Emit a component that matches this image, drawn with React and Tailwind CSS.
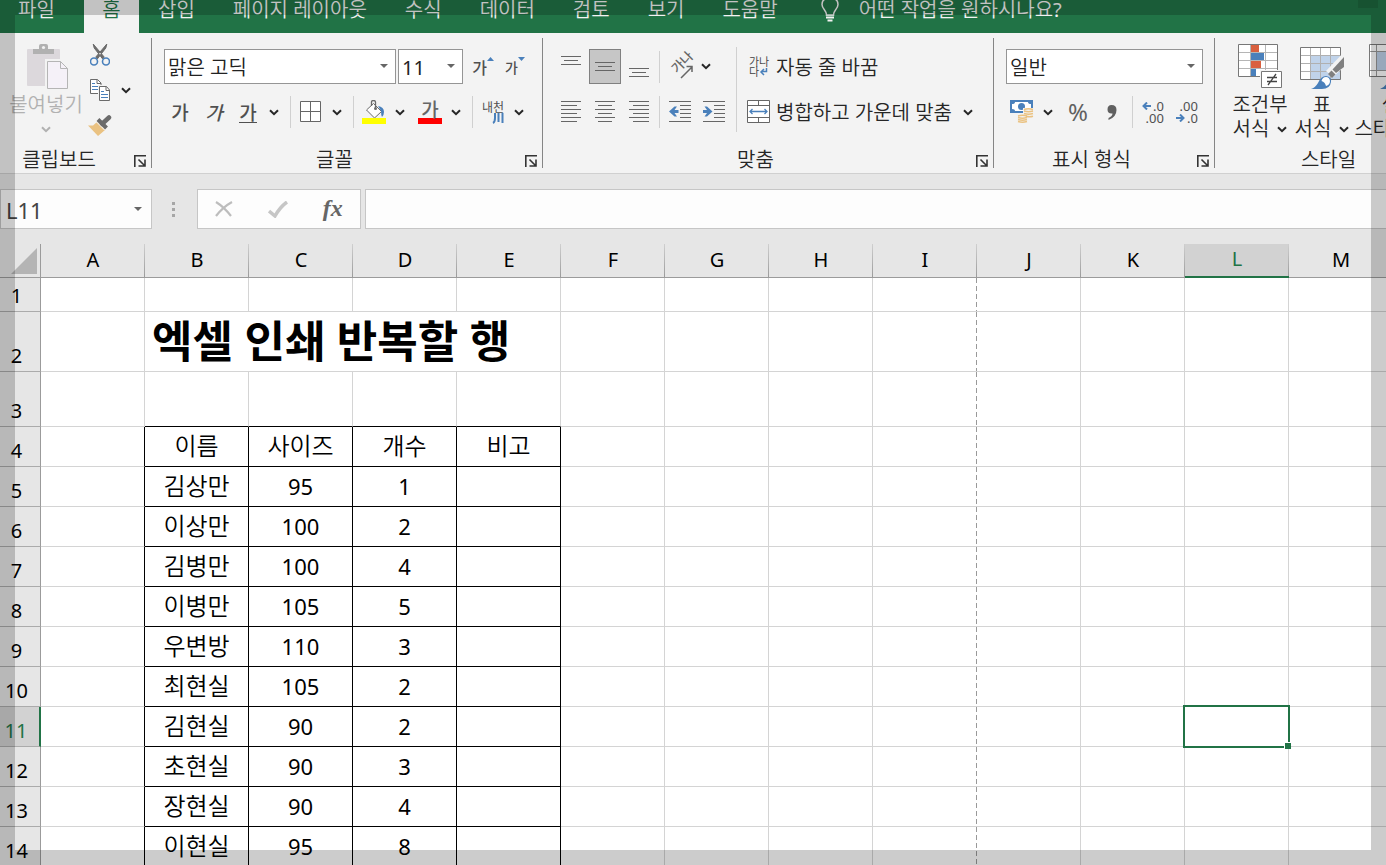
import React, { useState } from "react";

const TABS = [
  "삽입",
  "페이지 레이아웃",
  "수식",
  "데이터",
  "검토",
  "보기",
  "도움말",
];

const COLUMNS = ["A", "B", "C", "D", "E", "F", "G", "H", "I", "J", "K", "L", "M"];

const ITEMS = [
  { name: "이름", size: "사이즈", count: "개수", note: "비고" },
  { name: "김상만", size: 95, count: 1, note: "" },
  { name: "이상만", size: 100, count: 2, note: "" },
  { name: "김병만", size: 100, count: 4, note: "" },
  { name: "이병만", size: 105, count: 5, note: "" },
  { name: "우변방", size: 110, count: 3, note: "" },
  { name: "최현실", size: 105, count: 2, note: "" },
  { name: "김현실", size: 90, count: 2, note: "" },
  { name: "초현실", size: 90, count: 3, note: "" },
  { name: "장현실", size: 90, count: 4, note: "" },
  { name: "이현실", size: 95, count: 8, note: "" },
];

const FIRST_ITEM_ROW = 4;

/* ---------- small pieces ---------- */

const Chevron = ({ className = "text-[#262626]" }) => (
  <svg width="10" height="7" viewBox="0 0 10 7" className={className}>
    <path d="M1 1.2l4 4 4-4" fill="none" stroke="currentColor" strokeWidth="2" />
  </svg>
);

const Caret = ({ className = "" }) => (
  <svg width="8" height="4" viewBox="0 0 8 4" className={className}>
    <path d="M0 0h8L4 4z" fill="#666" />
  </svg>
);

const Divider = () => <div className="ml-[6px] mr-1 h-8 w-px bg-[#d0d0d0]" />;

const IconButton = ({ label, className = "", children }) => (
  <button
    aria-label={label}
    className={`flex h-8 w-8 shrink-0 items-center justify-center ${className}`}
  >
    {children}
  </button>
);

const MenuButton = ({ label }) => (
  <button
    aria-label={label}
    className="flex h-8 w-5 shrink-0 items-center justify-center"
  >
    <Chevron />
  </button>
);

const Combo = ({ label, options, className = "" }) => (
  <label className={`relative block h-[35px] shrink-0 ${className}`}>
    <select
      aria-label={label}
      className="h-full w-full appearance-none border border-[#959595] bg-white pl-[3px] pt-0.5 text-xl leading-8 text-[#222]"
    >
      {options.map((o) => (
        <option key={o}>{o}</option>
      ))}
    </select>
    <Caret className="pointer-events-none absolute right-2 top-[15px]" />
  </label>
);

const Launcher = ({ label }) => (
  <button aria-label={label} className="mr-[5px] shrink-0">
    <svg width="12" height="12" viewBox="0 0 12 12">
      <path
        d="M.8 12V.8H12M4.5 4.5l6 6M11 4.5V11H4.5"
        fill="none"
        stroke="#333"
        strokeWidth="1.6"
      />
    </svg>
  </button>
);

const Group = ({ title, launcher = true, className = "", titleClass = "pr-2", children }) => (
  <section
    className={`my-[5px] flex h-[130px] shrink-0 flex-col justify-between border-r border-[#858585] ${className}`}
  >
    {children}
    <div className="flex h-4 items-center">
      <span className={`flex-1 text-center text-xl leading-4 ${titleClass}`}>{title}</span>
      {launcher && (
        <div className="flex h-full items-end pb-px">
          <Launcher label={`${title} 설정`} />
        </div>
      )}
    </div>
  </section>
);

const LargeButton = ({ icon, lines, menu = true, className = "" }) => (
  <button
    className={`flex shrink-0 flex-col items-center pt-[6px] text-xl leading-6 ${className}`}
  >
    <span className="mb-[3px] flex h-[46px] items-start">{icon}</span>
    <span className="whitespace-nowrap">{lines[0]}</span>
    <span className="flex h-6 items-center gap-2 whitespace-nowrap">
      {lines[1]}
      {menu && <Chevron className="text-current" />}
    </span>
  </button>
);

/* ---------- icons ---------- */

const PasteIcon = () => (
  <svg width="42" height="46" viewBox="0 0 42 46" className="ml-1">
    <rect x="0" y="5" width="33" height="37" rx="1" fill="#dcd8dc" />
    <path d="M6 10V5h6V2q0-2 2-2h5q2 0 2 2v3h6v5z" fill="#b1b1b1" />
    <circle cx="16.500" cy="3.500" r="1.600" fill="#f3f3f3" />
    <path d="M18 15h16l8 8v23H18z" fill="#f3f3f3" />
    <path d="M20.500 17.500h13l7 7v20h-20z" fill="#f5f1f8" stroke="#b5b5b5" />
    <path d="M33.500 17.500v7h7" fill="none" stroke="#b5b5b5" />
  </svg>
);

const CutIcon = () => (
  <svg width="20" height="22" viewBox="0 0 20 22">
    <path d="M3.200 0l1 4 8.500 11 1.500-2zM16.800 0l-1 4-8.500 11-1.500-2z" fill="#6b6b6b" stroke="#6b6b6b" />
    <circle cx="4" cy="17.500" r="3.500" fill="none" stroke="#4a80bb" strokeWidth="1.600" />
    <circle cx="16" cy="17.500" r="3.500" fill="none" stroke="#4a80bb" strokeWidth="1.600" />
  </svg>
);

const CopyIcon = () => (
  <svg width="20" height="22" viewBox="0 0 20 22">
    <path d="M.5.5h7l3.500 3.500v10.500H.5z" fill="#fff" stroke="#6b6b6b" />
    <path d="M7 .5V4.500h4" fill="none" stroke="#6b6b6b" />
    <path d="M2 4.500h3M2 7.500h6M2 10.500h6" stroke="#4a80bb" />
    <path d="M8 6h9l3 3v13H8z" fill="#f3f3f3" />
    <path d="M9.500 7.500h7l3 3.500v10.500h-10z" fill="#fff" stroke="#6b6b6b" />
    <path d="M16 7.500v4h4" fill="none" stroke="#6b6b6b" />
    <path d="M11 12.500h3M11 15.500h7M11 18.500h7" stroke="#4a80bb" />
  </svg>
);

const BrushIcon = () => (
  <svg width="24" height="21" viewBox="0 0 24 21">
    <path d="M0 10.500l5 0 4-3.500 8 8-7 6z" fill="#eac282" />
    <path d="M10 4.500l8.500 8.500" stroke="#6b6b6b" strokeWidth="4" />
    <path d="M14 9l7-6.500" stroke="#6b6b6b" strokeWidth="4.500" strokeLinecap="round" />
    <path d="M8 6.500l8.500 8.500" stroke="#f3f3f3" />
  </svg>
);

const BordersIcon = () => (
  <svg width="22" height="22" viewBox="0 0 22 22">
    <path d="M.5.5h20v20H.5z" fill="#fff" stroke="#666" />
    <path d="M10.500 0v21M0 10.500h21" stroke="#666" />
  </svg>
);

const FillIcon = () => (
  <svg width="24" height="24" viewBox="0 0 24 24">
    <path d="M11.500 3.500l8 8-7 6.500-8-8z" fill="#fff" stroke="#6b6b6b" />
    <path d="M9.500 6V2q0-1.500 2-1.500t2 1.500v6" fill="none" stroke="#6b6b6b" strokeWidth="1.300" />
    <circle cx="13.500" cy="8.500" r="1.500" fill="#6b6b6b" />
    <path d="M16 6q6 1 6 6 0 3-2 5-1-2-1-6z" fill="#4a80bb" />
    <path d="M0 18h24v6H0z" fill="#ff0" />
  </svg>
);

const PhoneticIcon = () => (
  <span className="flex flex-col items-center text-xs leading-3 text-[#505050]">
    내천
    <svg width="22" height="11" viewBox="0 0 22 11">
      <path d="M13 0v5q0 4-2 5M16.500 0v9M20.500 0v10" fill="none" stroke="#4a80bb" strokeWidth="2" />
    </svg>
  </span>
);

const AlignVertical = ({ className = "" }) => (
  <svg width="20" height="10" viewBox="0 0 20 10" className={className}>
    <path d="M0 .5h20M3 4.500h14M0 8.500h20" stroke="#666" />
  </svg>
);

const AlignIcon = ({ d }) => (
  <svg width="20" height="22" viewBox="0 0 20 22">
    <path d="M0 .5h20M0 8.500h20M0 16.500h20" stroke="#666" />
    <path d={d} stroke="#666" />
  </svg>
);

const IndentIcon = ({ arrow }) => (
  <svg width="22" height="22" viewBox="0 0 22 22">
    <path d="M0 .5h22M11 4.500h11M11 8.500h11M11 12.500h11M11 16.500h11M0 20.500h22" stroke="#666" />
    <path d={arrow} fill="#4a80bb" />
  </svg>
);

const OrientationIcon = () => (
  <svg width="24" height="24" viewBox="0 0 24 24" className="overflow-visible">
    <text
      x="0"
      y="0"
      transform="translate(9 19) rotate(-45)"
      fontSize="13"
      fontWeight="500"
      fill="#666"
      fontFamily="Noto Sans CJK KR, sans-serif"
    >
      가나
    </text>
    <path d="M13 23L24 12M18.500 11.500H24V17" fill="none" stroke="#666" strokeWidth="1.500" />
  </svg>
);

const WrapIcon = () => (
  <span className="flex w-[25px] flex-col pl-1 text-left text-[11px] leading-[10px] text-[#404040]">
    <span className="whitespace-nowrap">가나</span>
    <span className="flex items-center">
      다
      <svg width="9" height="8" viewBox="0 0 9 8">
        <path d="M7.500 0v3.500H2M5 1L2 4l3 3" fill="none" stroke="#4a80bb" strokeWidth="1.500" />
      </svg>
    </span>
  </span>
);

const MergeIcon = () => (
  <svg width="23" height="24" viewBox="0 0 23 24">
    <path d="M.5.5h22v22H.5z" fill="#fff" stroke="#666" />
    <path d="M0 5.500h23M0 17.500h23M11.500 0v5.500M11.500 17.500V23" stroke="#666" />
    <path d="M3 11.500h17M5.500 9L3 11.500 5.500 14M17.500 9l2.500 2.500-2.500 2.500" fill="none" stroke="#4a80bb" strokeWidth="1.300" />
  </svg>
);

const CurrencyIcon = () => (
  <svg width="24" height="24" viewBox="0 0 24 24">
    <path d="M0 0h23v13H0z" fill="#4a80bb" />
    <path d="M5 2h13q0 2 3 2v5q-3 0-3 2H5q0-2-3-2V4q3 0 3-2z" fill="#fff" />
    <circle cx="11.500" cy="6.500" r="3.500" fill="#4a80bb" />
    <path d="M13 8h10v9H18v5H8v-8h5z" fill="#f3f3f3" />
    <g fill="none" stroke="#eac282" strokeWidth="1.500">
      <path d="M14 9.500q4.500-1.500 9 0M14 11q4.500 1.500 9 0M14 13.500q4.500 1.500 9 0M16 16.200q3.500 1 7 0" />
      <path d="M8 16q4.500-1.500 9 0M8 17.500q4.500 1.500 9 0M8 19.500q4.500 1.500 9 0M8 21.500q4.500 1.500 9 0" />
    </g>
  </svg>
);

const SmallArrow = ({ flip = false }) => (
  <svg width="9" height="8" viewBox="0 0 9 8" className={flip ? "-scale-x-100" : ""}>
    <path d="M9 4H1.500M5 .5L1.500 4 5 7.500" fill="none" stroke="#4a80bb" strokeWidth="2" />
  </svg>
);

const DecimalIcon = ({ increase }) => (
  <span className="flex flex-col items-end text-[13px] leading-3 text-[#505050]">
    <span className="flex items-center gap-0.5">
      {increase && <SmallArrow />}
      {increase ? ".0" : ".00"}
    </span>
    <span className="flex items-center gap-0.5">
      {!increase && <SmallArrow flip />}
      {increase ? ".00" : ".0"}
    </span>
  </span>
);

const ConditionalIcon = () => (
  <svg width="44" height="44" viewBox="0 0 44 44">
    <path d="M.5.5h39v32H.5z" fill="#fff" stroke="#777" />
    <path d="M12.500 1v31M27.500 1v31M1 8.500h38M1 16.500h38M1 24.500h38" stroke="#b5b5b5" />
    <path d="M13 1h8v7h-8zM13 17h10v7H13z" fill="#d9603f" />
    <path d="M13 9h13v7H13zM13 25h5v7h-5z" fill="#4a80bb" />
    <path d="M22 26h22v18H22z" fill="#f3f3f3" />
    <path d="M23.500 27.500h20v16h-20z" fill="#fff" stroke="#777" />
    <path d="M29 33.500h10M29 37.500h10M38 30l-8 11" stroke="#444" strokeWidth="1.300" />
  </svg>
);

const PaintBrush = () => (
  <>
    <path d="M44 8v15L33 33l-7-6z" fill="#f3f3f3" />
    <path d="M44 13v10l-8 6-3.500-3.500z" fill="#808080" />
    <path d="M31.500 26.500l4 4-3.500 3.500-4-4z" fill="#808080" />
    <path d="M11 45q4-1 7-6 3-7 8-7 6 1 5 6-1 7-9 7z" fill="#4a80bb" />
    <path d="M21.500 37q1-4 4.500-4t4 4q0 4-4 5-1-4-4.500-5z" fill="#fff" />
  </>
);

const FormatTableIcon = () => (
  <svg width="44" height="46" viewBox="0 0 44 46">
    <path d="M.5 3.500h40v32H.5z" fill="#fff" stroke="#777" />
    <path d="M11 12h29v23H11z" fill="#c0d3ea" />
    <path d="M10.500 4v31M20.500 4v31M30.500 4v31M1 11.500h39M1 19.500h39M1 27.500h39" stroke="#b0b0b0" />
    <PaintBrush />
  </svg>
);

const CellStyleIcon = () => (
  <svg width="44" height="46" viewBox="0 0 44 46">
    <path d="M.5.5h39v32H.5z" fill="#fff" stroke="#777" />
    <path d="M8 8h24v18H8z" fill="#c0d3ea" />
    <path d="M7.500 1v31M32.500 1v31M1 7.500h38M1 26.500h38" stroke="#999" />
    <PaintBrush />
  </svg>
);

/* ---------- ribbon ---------- */

const TabStrip = () => (
  <nav className="flex h-[33px] shrink-0 items-start overflow-hidden whitespace-nowrap bg-[#217346] text-xl leading-[19px] text-[#f3f3f3]">
    <button className="h-full w-[84px] shrink-0 pb-[14px] pl-[18px] text-left">파일</button>
    <button className="h-full w-[55px] shrink-0 bg-[#f3f3f3] pb-[14px] text-center text-[#217346]">
      홈
    </button>
    {TABS.map((tab) => (
      <button key={tab} className="h-full shrink-0 px-[19px] pb-[14px]">
        {tab}
      </button>
    ))}
    <button className="flex h-full shrink-0 items-start gap-5 pl-6">
      <svg width="18" height="22" viewBox="0 0 18 22">
        <path
          d="M5.500 15q0-2.500-2-5Q1 7 1 4.500 1-2 9-2t8 6.500q0 2.500-2.500 5.500-2 2.500-2 5z"
          fill="none"
          stroke="#f3f3f3"
          strokeWidth="1.500"
        />
        <path d="M5 17.500h8M6.500 20.500h5" stroke="#f3f3f3" strokeWidth="1.800" />
      </svg>
      <span>어떤 작업을 원하시나요?</span>
    </button>
    <div className="ml-auto mr-2 h-2 w-5 shrink-0 bg-black/10" />
  </nav>
);

const ClipboardGroup = () => (
  <Group title="클립보드" className="w-[152px]" titleClass="pr-4">
    <div className="flex pl-2">
      <LargeButton
        icon={<PasteIcon />}
        lines={["붙여넣기", ""]}
        className="w-[76px] text-[#b1b1b1]"
      />
      <div className="flex flex-col">
        <IconButton label="잘라내기" className="h-[34px]">
          <CutIcon />
        </IconButton>
        <div className="flex h-9 items-center">
          <IconButton label="복사">
            <CopyIcon />
          </IconButton>
          <MenuButton label="복사 옵션" />
        </div>
        <IconButton label="서식 복사" className="h-[34px]">
          <BrushIcon />
        </IconButton>
      </div>
    </div>
  </Group>
);

const FontGroup = () => (
  <Group title="글꼴" className="w-[391px]">
    <div className="flex flex-col gap-3 pl-3 pt-[11px] text-[#505050]">
      <div className="flex items-center">
        <Combo label="글꼴" options={["맑은 고딕", "굴림", "돋움"]} className="mr-0.5 w-[232px]" />
        <Combo label="글꼴 크기" options={["11", "12", "14"]} className="mr-1 w-[65px]" />
        <IconButton label="글꼴 크기 크게">
          <span className="flex items-start font-['Noto_Sans_CJK_KR',sans-serif] text-base font-medium leading-5">
            가
            <svg width="7" height="4" viewBox="0 0 7 4">
              <path d="M0 4h7L3.500 0z" fill="#4a80bb" />
            </svg>
          </span>
        </IconButton>
        <IconButton label="글꼴 크기 작게">
          <span className="flex items-start font-['Noto_Sans_CJK_KR',sans-serif] text-sm font-medium leading-5">
            가
            <svg width="7" height="4" viewBox="0 0 7 4">
              <path d="M0 0h7L3.500 4z" fill="#4a80bb" />
            </svg>
          </span>
        </IconButton>
      </div>
      <div className="flex items-center font-['Noto_Sans_CJK_KR',sans-serif] text-[19px] leading-5">
        <IconButton label="굵게" className="mr-0.5">
          <b className="font-medium">가</b>
        </IconButton>
        <IconButton label="기울임꼴" className="mr-0.5">
          <i className="font-medium">가</i>
        </IconButton>
        <IconButton label="밑줄">
          <span className="border-b border-[#505050] font-medium">가</span>
        </IconButton>
        <MenuButton label="밑줄 옵션" />
        <Divider />
        <IconButton label="테두리">
          <BordersIcon />
        </IconButton>
        <MenuButton label="테두리 옵션" />
        <Divider />
        <IconButton label="채우기 색">
          <FillIcon />
        </IconButton>
        <MenuButton label="채우기 색 옵션" />
        <IconButton label="글꼴 색" className="ml-1">
          <span className="w-6 border-b-[6px] border-[#f00] font-medium leading-[18px] text-[#666]">
            가
          </span>
        </IconButton>
        <MenuButton label="글꼴 색 옵션" />
        <Divider />
        <IconButton label="윗주 필드">
          <PhoneticIcon />
        </IconButton>
        <MenuButton label="윗주 옵션" />
      </div>
    </div>
  </Group>
);

const AlignGroup = () => (
  <Group title="맞춤" className="w-[451px]">
    <div className="flex pl-3 pt-[9px]">
      <div className="flex flex-col gap-3 pt-0.5">
        <div className="flex h-[35px] items-center">
          <IconButton label="위쪽 맞춤" className="mr-0.5">
            <AlignVertical className="mb-3" />
          </IconButton>
          <button
            aria-label="가운데 맞춤"
            className="mr-0.5 flex h-full w-8 items-center justify-center border border-[#808080] bg-[#c6c6c6]"
          >
            <AlignVertical />
          </button>
          <IconButton label="아래쪽 맞춤">
            <AlignVertical className="mt-3" />
          </IconButton>
          <div className="mx-1 h-8 w-px bg-[#d0d0d0]" />
          <IconButton label="방향" className="w-7">
            <OrientationIcon />
          </IconButton>
          <MenuButton label="방향 옵션" />
        </div>
        <div className="flex items-center">
          <IconButton label="왼쪽 맞춤" className="mr-0.5">
            <AlignIcon d="M0 4.500h16M0 12.500h16M0 20.500h16" />
          </IconButton>
          <IconButton label="가로 가운데 맞춤" className="mr-0.5">
            <AlignIcon d="M3 4.500h14M3 12.500h14M3 20.500h14" />
          </IconButton>
          <IconButton label="오른쪽 맞춤">
            <AlignIcon d="M4 4.500h16M4 12.500h16M4 20.500h16" />
          </IconButton>
          <div className="mx-1 h-8 w-px bg-[#d0d0d0]" />
          <IconButton label="내어쓰기" className="mr-0.5">
            <IndentIcon arrow="M0 10.500L5.500 5.500H8L5.500 9H9.500v3H5.500L8 15.500H5.500z" />
          </IconButton>
          <IconButton label="들여쓰기">
            <IndentIcon arrow="M9.500 10.500L4 5.500H1.500L4 9H0v3h4l-2.500 3.500H4z" />
          </IconButton>
        </div>
      </div>
      <div className="ml-[6px] mr-2 h-[85px] w-px bg-[#d0d0d0]" />
      <div className="flex flex-col gap-3 pt-0.5 text-xl">
        <button className="flex h-[35px] items-center gap-[6px] whitespace-nowrap">
          <WrapIcon />
          <span className="pt-0.5">자동 줄 바꿈</span>
        </button>
        <div className="flex h-8 items-center">
          <button className="flex items-center gap-[6px] whitespace-nowrap pl-0.5">
            <MergeIcon />
            <span className="pt-0.5">병합하고 가운데 맞춤</span>
          </button>
          <div className="ml-[6px] flex">
            <MenuButton label="병합 옵션" />
          </div>
        </div>
      </div>
    </div>
  </Group>
);

const NumberGroup = () => (
  <Group title="표시 형식" className="w-[221px]">
    <div className="flex flex-col gap-3 pl-3 pt-[11px]">
      <Combo label="표시 형식" options={["일반", "숫자", "통화"]} className="w-[197px]" />
      <div className="flex items-center">
        <IconButton label="회계 표시 형식">
          <CurrencyIcon />
        </IconButton>
        <MenuButton label="회계 표시 형식 옵션" />
        <IconButton label="백분율 스타일" className="ml-1">
          <span className="text-2xl text-[#606060]">%</span>
        </IconButton>
        <IconButton label="쉼표 스타일" className="ml-0.5">
          <svg width="10" height="15" viewBox="0 0 10 15">
            <path d="M4.500 0Q9.500 0 9.500 5q0 7-8 10v-2q4-2 4-4.500-5 .5-5-4Q.5 0 4.500 0z" fill="#606060" />
          </svg>
        </IconButton>
        <div className="mx-1 h-8 w-px bg-[#d0d0d0]" />
        <IconButton label="자릿수 늘림" className="mr-0.5">
          <DecimalIcon increase />
        </IconButton>
        <IconButton label="자릿수 줄임">
          <DecimalIcon increase={false} />
        </IconButton>
      </div>
    </div>
  </Group>
);

const StyleGroup = () => (
  <Group title="스타일" launcher={false} className="w-[224px]" titleClass="pl-1">
    <div className="flex pl-[14px]">
      <LargeButton icon={<ConditionalIcon />} lines={["조건부", "서식"]} className="w-[62px]" />
      <LargeButton icon={<FormatTableIcon />} lines={["표", "서식"]} className="w-[62px]" />
      <LargeButton icon={<CellStyleIcon />} lines={["셀", "스타일"]} className="w-[76px]" />
    </div>
  </Group>
);

/* ---------- formula bar ---------- */

const FormulaBar = () => {
  const [cell, setCell] = useState("L11");
  const [formula, setFormula] = useState("");

  return (
    <div className="flex h-[70px] shrink-0 items-center">
      <div className="flex h-10 w-[152px] shrink-0 items-center border border-[#c6c6c6] bg-[#fdfdfd]">
        <input
          aria-label="이름 상자"
          value={cell}
          onChange={(e) => setCell(e.target.value)}
          className="min-w-0 flex-1 bg-transparent pl-[5px] pt-0.5 text-[22px] leading-8 text-[#444] outline-none"
        />
        <button aria-label="이름 목록" className="px-[9px]">
          <Caret />
        </button>
      </div>
      <div className="flex w-[45px] shrink-0 flex-col items-center gap-[3px] pr-0.5">
        <span className="size-[3px] bg-[#a6a6a6]" />
        <span className="size-[3px] bg-[#a6a6a6]" />
        <span className="size-[3px] bg-[#a6a6a6]" />
      </div>
      <div className="mr-1 flex h-10 w-[164px] shrink-0 items-center justify-around border border-[#c6c6c6] bg-[#fdfdfd]">
        <button aria-label="취소">
          <svg width="18" height="16" viewBox="0 0 18 16">
            <path d="M1 1q8 5 15 14M17 1Q8 6 1 15" fill="none" stroke="#bdbdbd" strokeWidth="2.200" />
          </svg>
        </button>
        <button aria-label="입력">
          <svg width="20" height="17" viewBox="0 0 20 17">
            <path d="M1 10l6 5Q12 6 19 1" fill="none" stroke="#c6c6c6" strokeWidth="3.500" />
          </svg>
        </button>
        <button
          aria-label="함수 삽입"
          className="pb-0.5 font-['Liberation_Serif',serif] text-2xl font-bold italic leading-6 text-[#666]"
        >
          fx
        </button>
      </div>
      <input
        aria-label="수식 입력줄"
        value={formula}
        onChange={(e) => setFormula(e.target.value)}
        className="h-10 min-w-0 flex-1 border-y border-l border-[#c6c6c6] bg-[#fdfdfd] px-2 text-xl outline-none"
      />
    </div>
  );
};

/* ---------- sheet ---------- */

const RowHeader = ({ row, height }) => (
  <th
    scope="row"
    className={`pb-[3px] pr-[7px] align-bottom font-normal leading-6 ${height} ${
      row === 11
        ? "border-b border-r-2 border-b-[#ababab] border-r-[#217346] bg-[#d2d2d2] text-[#217346]"
        : "border-b border-r border-b-[#ababab] border-r-[#9b9b9b] bg-[#e6e6e6]"
    }`}
  >
    {row}
  </th>
);

// Column I ends at the page break, so its right edge is a dashed line
const EmptyCells = ({ from, row }) =>
  COLUMNS.slice(from).map((col) => (
    <td
      key={col}
      className={`relative border-b border-[#d4d4d4] ${
        col === "I"
          ? "bg-[repeating-linear-gradient(#999_0_5px,#fff_5px_8px)] bg-[length:1px_100%] bg-right bg-no-repeat"
          : "border-r"
      }`}
    >
      {row === 11 && col === "L" && (
        <div className="absolute -inset-0.5 z-10 border-2 border-[#217346]">
          <div className="absolute -bottom-[3px] -right-[3px] size-[7px] border-l border-t border-white bg-[#217346]" />
        </div>
      )}
    </td>
  ));

const gridCell = "border-b border-r border-[#d4d4d4]";
const boxCell = "border-b border-r border-black p-0 pb-0.5 text-center leading-8";

const Sheet = () => (
  <table className="w-full min-w-[1393px] table-fixed border-separate border-spacing-0 text-xl text-black">
    <colgroup>
      <col className="w-[41px]" />
      {COLUMNS.map((col) => (
        <col key={col} />
      ))}
    </colgroup>
    <thead>
      <tr>
        <th className="h-[34px] border-b border-r border-[#9b9b9b] bg-[#e6e6e6] p-0">
          <svg width="26" height="26" viewBox="0 0 26 26" className="ml-auto mr-[3px]">
            <path d="M26 0v26H0z" fill="#b4b4b4" />
          </svg>
        </th>
        {COLUMNS.map((col) => (
          <th
            key={col}
            scope="col"
            className={`h-[34px] bg-[linear-gradient(#cfcfcf,#9b9b9b)] bg-[length:1px_100%] bg-right bg-no-repeat p-0 pb-0.5 font-normal leading-[30px] ${
              col === "L"
                ? "border-b-2 border-[#217346] bg-[#d2d2d2] text-[#217346]"
                : "border-b border-[#9b9b9b] bg-[#e6e6e6]"
            }`}
          >
            {col}
          </th>
        ))}
      </tr>
    </thead>
    <tbody>
      <tr>
        <RowHeader row={1} height="h-[34px]" />
        <EmptyCells from={0} row={1} />
      </tr>
      <tr>
        <RowHeader row={2} height="h-[60px]" />
        <td className={gridCell} />
        <td
          colSpan={4}
          className={`${gridCell} whitespace-nowrap py-0 pb-0.5 pl-[7px] font-['Noto_Sans','Noto_Sans_CJK_KR',sans-serif] text-[44px] font-bold leading-[56px]`}
        >
          엑셀 인쇄 반복할 행
        </td>
        <EmptyCells from={5} row={2} />
      </tr>
      <tr>
        <RowHeader row={3} height="h-[55px]" />
        <td className={gridCell} />
        {["B", "C", "D", "E"].map((col) => (
          <td key={col} className="border-b border-r border-b-black border-r-[#d4d4d4]" />
        ))}
        <EmptyCells from={5} row={3} />
      </tr>
      {ITEMS.map((item, i) => {
        const row = FIRST_ITEM_ROW + i;
        const valueSize = i === 0 ? "text-2xl" : "text-[22px]";
        return (
          <tr key={row}>
            <RowHeader row={row} height="h-10" />
            <td className="border-b border-r border-b-[#d4d4d4] border-r-black" />
            <td className={`${boxCell} text-2xl`}>{item.name}</td>
            <td className={`${boxCell} ${valueSize}`}>{item.size}</td>
            <td className={`${boxCell} ${valueSize}`}>{item.count}</td>
            <td className={`${boxCell} ${valueSize}`}>{item.note}</td>
            <EmptyCells from={5} row={row} />
          </tr>
        );
      })}
    </tbody>
  </table>
);

const App = () => {
  return (
    <div className="flex h-screen flex-col overflow-hidden bg-[#e6e6e6] font-['Noto_Sans','Noto_Sans_CJK_KR_DemiLight','Noto_Sans_CJK_KR_Light','Noto_Sans_CJK_KR',sans-serif] text-[#262626]">
      <TabStrip />
      <div className="flex shrink-0 overflow-hidden border-b border-[#d0d0d0] bg-[#f3f3f3]">
        <ClipboardGroup />
        <FontGroup />
        <AlignGroup />
        <NumberGroup />
        <StyleGroup />
      </div>
      <FormulaBar />
      <main className="min-h-0 flex-1 overflow-hidden bg-white">
        <Sheet />
      </main>
      {/* Shaded frame around the window */}
      <div className="pointer-events-none fixed inset-0 z-20 border-[15px] border-black/20" />
    </div>
  );
};

export default App;
